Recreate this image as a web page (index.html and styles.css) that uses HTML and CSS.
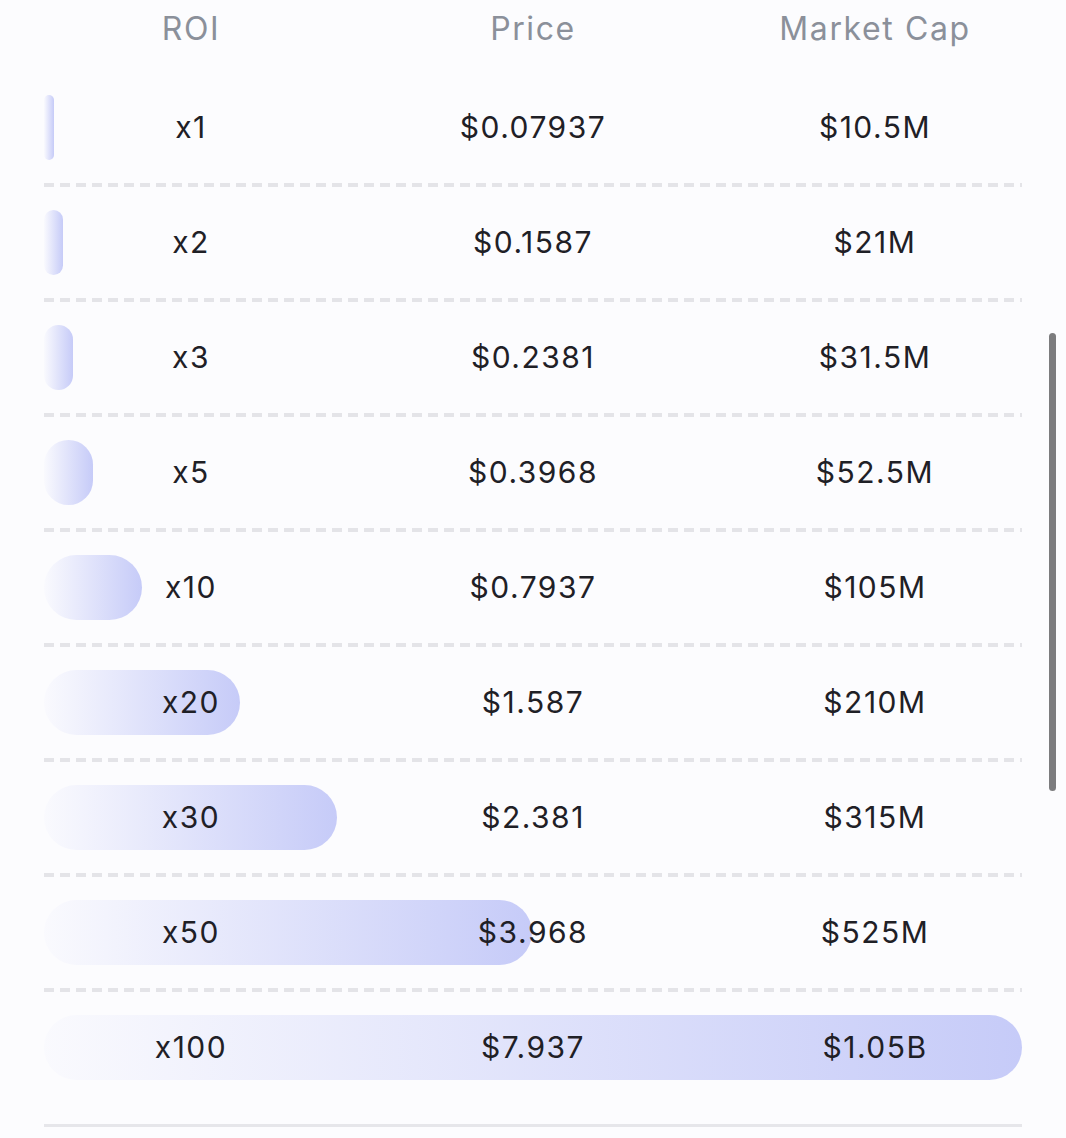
FILE: index.html
```html
<!DOCTYPE html>
<html>
<head>
<meta charset="utf-8">
<link rel="stylesheet" href="styles.css">
</head>
<body>
<div class="page">
  <div class="head">
    <div class="cell">ROI</div>
    <div class="cell">Price</div>
    <div class="cell">Market Cap</div>
  </div>
  <div class="rows">
    <div class="row"><div class="bar" style="width:10px"></div><div class="cell">x1</div><div class="cell">$0.07937</div><div class="cell">$10.5M</div></div>
    <div class="sep"></div>
    <div class="row"><div class="bar" style="width:19px"></div><div class="cell">x2</div><div class="cell">$0.1587</div><div class="cell">$21M</div></div>
    <div class="sep"></div>
    <div class="row"><div class="bar" style="width:29px"></div><div class="cell">x3</div><div class="cell">$0.2381</div><div class="cell">$31.5M</div></div>
    <div class="sep"></div>
    <div class="row"><div class="bar" style="width:49px"></div><div class="cell">x5</div><div class="cell">$0.3968</div><div class="cell">$52.5M</div></div>
    <div class="sep"></div>
    <div class="row"><div class="bar" style="width:98px"></div><div class="cell">x10</div><div class="cell">$0.7937</div><div class="cell">$105M</div></div>
    <div class="sep"></div>
    <div class="row"><div class="bar" style="width:196px"></div><div class="cell">x20</div><div class="cell">$1.587</div><div class="cell">$210M</div></div>
    <div class="sep"></div>
    <div class="row"><div class="bar" style="width:293px"></div><div class="cell">x30</div><div class="cell">$2.381</div><div class="cell">$315M</div></div>
    <div class="sep"></div>
    <div class="row"><div class="bar" style="width:488px"></div><div class="cell">x50</div><div class="cell">$3.968</div><div class="cell">$525M</div></div>
    <div class="sep"></div>
    <div class="row"><div class="bar" style="width:978px"></div><div class="cell">x100</div><div class="cell">$7.937</div><div class="cell">$1.05B</div></div>
  </div>
  <div class="bottom"></div>
  <div class="scrollbar"></div>
</div>
</body>
</html>
```
FILE: styles.css
```css
html, body {
  margin: 0;
  padding: 0;
  background: #fcfcfe;
}
.page {
  position: relative;
  width: 1066px;
  height: 1138px;
  padding: 0 20px;
  box-sizing: border-box;
  font-family: Inter, "Noto Sans", sans-serif;
  overflow: hidden;
}
.head {
  display: grid;
  grid-template-columns: repeat(3, 1fr);
  height: 58px;
  line-height: 58px;
  color: #8b909a;
  font-size: 32px;
  font-weight: 400;
  letter-spacing: 1.6px;
}
.cell {
  text-align: center;
  position: relative;
}
.rows {
  margin-top: 37px;
}
.row {
  position: relative;
  display: grid;
  grid-template-columns: repeat(3, 1fr);
  height: 65px;
  line-height: 65px;
  font-size: 30px;
  letter-spacing: 1.5px;
  color: #1f2026;
}
.bar {
  position: absolute;
  left: 24px;
  top: 0;
  height: 65px;
  border-radius: 33px;
  background: linear-gradient(to right, rgba(205, 209, 249, 0.05), #c6cbf8);
}
.sep {
  margin: 23px 24px;
  height: 4px;
  background-image: repeating-linear-gradient(to right, #e4e4e8 0, #e4e4e8 10px, transparent 10px, transparent 16px);
}
.bottom {
  margin: 44px 24px 0;
  height: 3px;
  background: #e6e6ea;
}
.scrollbar {
  position: absolute;
  left: 1049px;
  top: 333px;
  width: 7px;
  height: 458px;
  border-radius: 4px;
  background: #7c7c7e;
}
```
